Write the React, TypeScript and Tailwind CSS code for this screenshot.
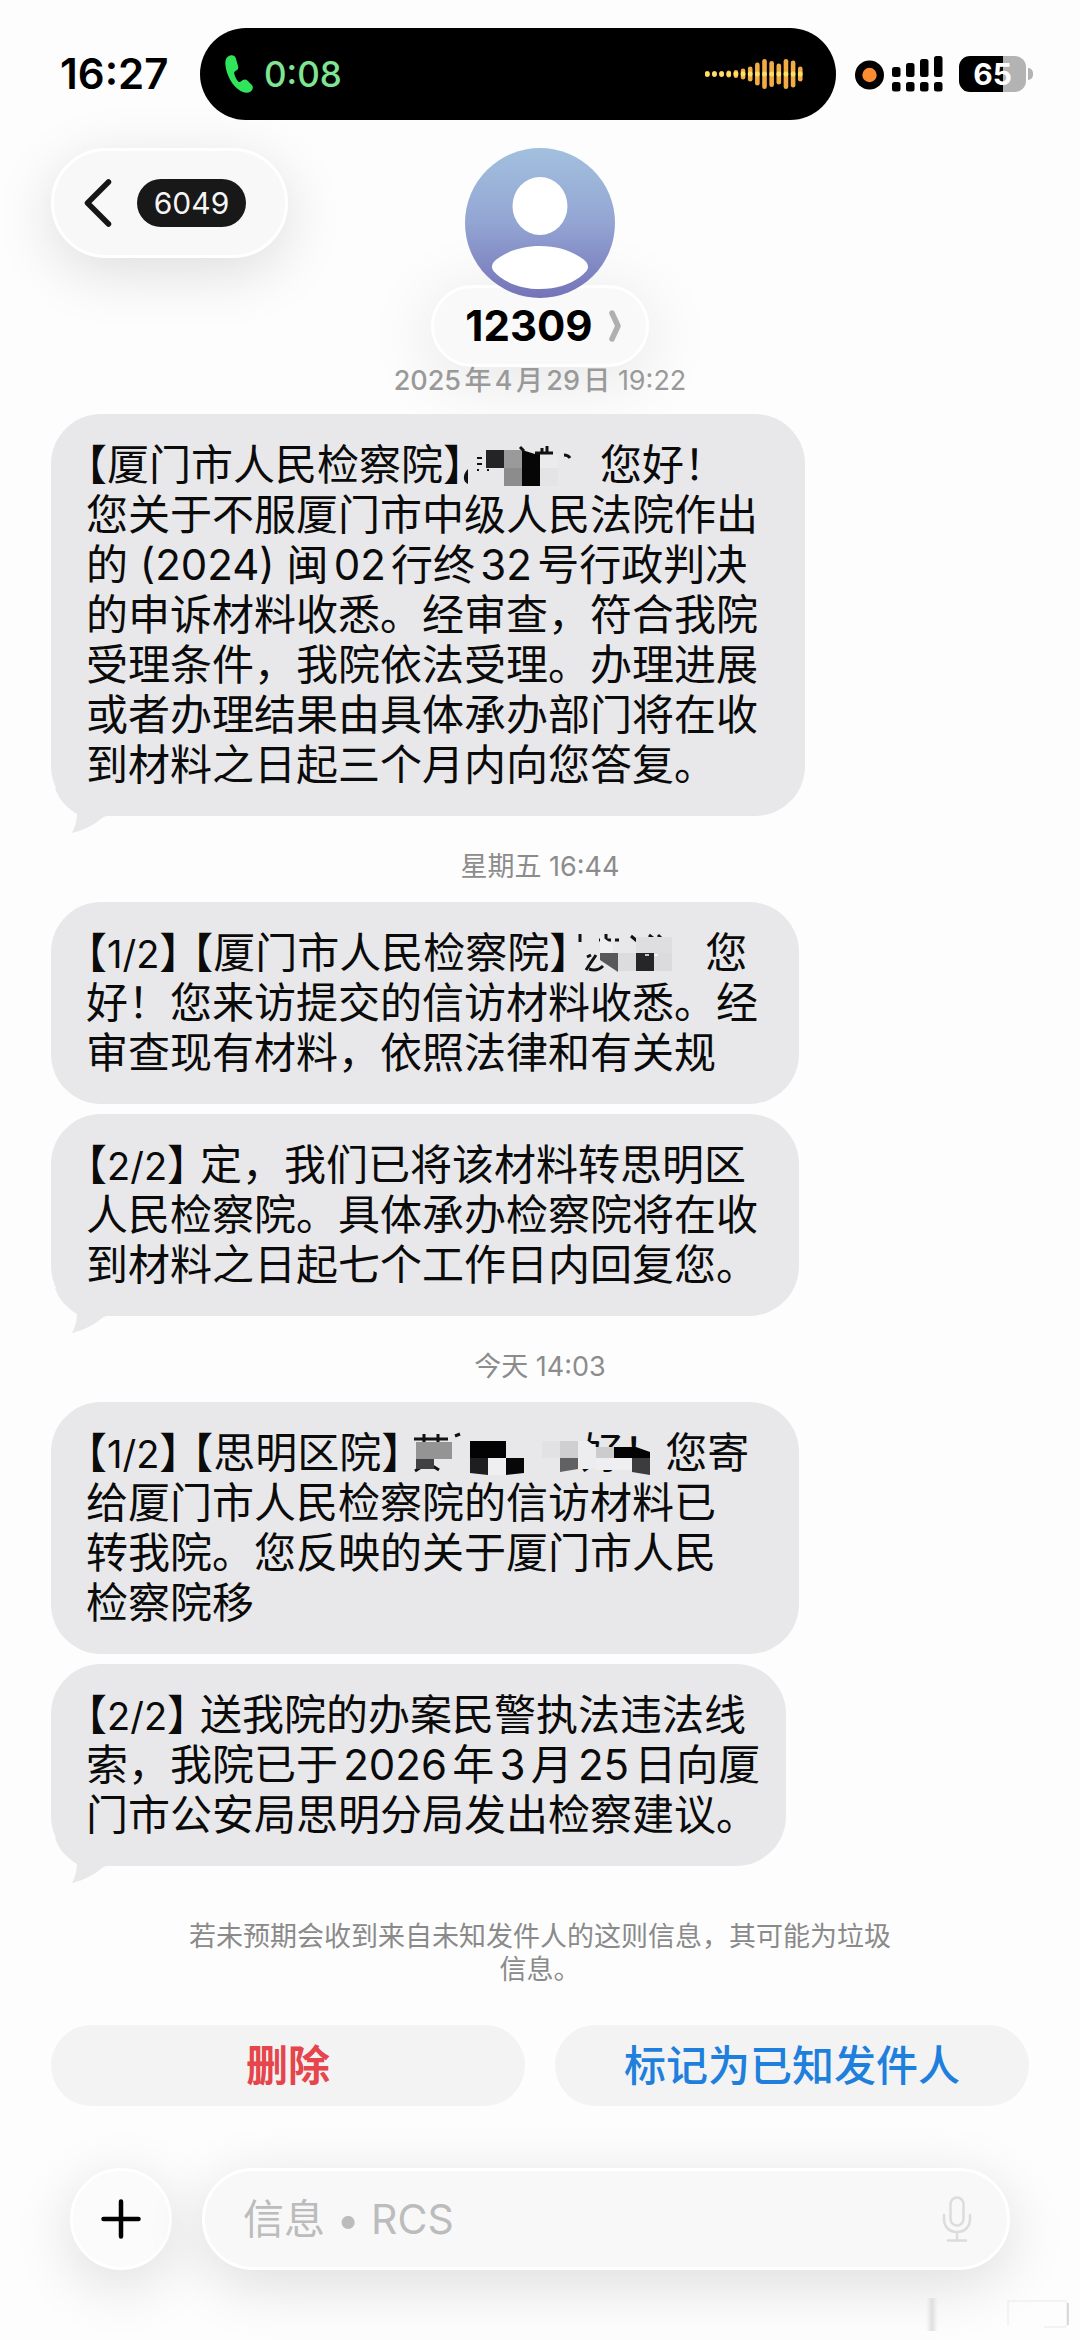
import React from 'react';

const WAVE = [6, 6, 6, 7, 8, 11, 15, 23, 30, 26, 21, 30, 27, 15];

const SIGNAL = [10, 14, 18, 21];

const StatusBar = () => (
  <div className="flex items-center pt-7">
    <div className="w-[200px] pl-[60px] text-[42px] leading-[50px] font-semibold text-black">16:27</div>
    <div className="flex-1 h-[92px] rounded-full bg-black flex items-center justify-between pl-[25px] pr-[32px]">
      <div className="flex items-center gap-[11px]">
        <svg viewBox="0 0 28 38" className="w-7 h-[38px]" fill="#30e45c">
          <path d="M5 .6C2 1.6.2 4 .3 8c.3 8 3.800 17 9.700 23.500 3.600 3.900 7.500 6 11.400 6.200 3 .1 5.200-1.200 6.200-3.700.6-1.500.2-3-1-4.200l-4.200-4.200c-1.400-1.300-3-1.400-4.500-.5l-2.600 1.700c-.8.5-1.500.4-2.100-.3-2-2.300-3.400-5.300-4-8.300-.2-.9.100-1.500.9-2l1.600-1c1.400-.9 1.900-2.300 1.400-4L10.900 3.500C10.100.9 7.700-.3 5 .6z" />
        </svg>
        <span className="text-[35px] leading-[40px] font-medium text-[#7fe592]">0:08</span>
      </div>
      <svg viewBox="0 0 99 32" className="w-[99px] h-8">
        {WAVE.map((h, i) => (
          <g key={i}>
            <rect x={i * 7.15} y={16 - h / 2} width="4.600" height={h} rx="2.300" fill="#f3ab45" />
            <rect x={i * 7.15} y="13.500" width="4.600" height="5" rx="2" fill="#fbe267" />
          </g>
        ))}
      </svg>
    </div>
    <div className="w-[244px] flex items-center pl-[19px]">
      <svg viewBox="0 0 88 36" className="w-[88px] h-9">
        <circle cx="14.500" cy="19" r="14.500" />
        <circle cx="14.500" cy="19" r="7.200" fill="#fb8c32" />
        {SIGNAL.map((h, i) => (
          <g key={i}>
            <rect x={37 + i * 14} y={21 - h} width="8.500" height={h} rx="2.500" />
            <rect x={37 + i * 14} y="26" width="8.500" height="9.500" rx="2.500" />
          </g>
        ))}
      </svg>
      <div className="ml-4 h-9 w-[67px] rounded-[11px] flex items-center justify-center bg-linear-to-r from-black from-65% to-[#b3b3b3] to-65% text-[30px] leading-[36px] font-bold text-white">
        65
      </div>
      <div className="ml-[2px] w-[5px] h-3 rounded-r-full bg-[#b3b3b3]" />
    </div>
  </div>
);

const Header = () => (
  <header className="grid grid-cols-[1fr_auto_1fr] px-[51px] pt-7">
    <button
      aria-label="返回"
      className="justify-self-start w-[237px] h-[110px] rounded-full border-3 border-white bg-[#f8f8f8] flex items-center pl-[30px] gap-[25px] shadow-[0_14px_60px_rgba(0,0,0,0.13)]"
    >
      <svg viewBox="0 0 28 48" className="w-7 h-12" fill="none" stroke="#161616" strokeWidth="5.500" strokeLinecap="round" strokeLinejoin="round">
        <path d="M24.500 3L3.500 24l21 21" />
      </svg>
      <span className="w-[109px] h-12 rounded-full bg-[#181818] text-[#f5f5f5] text-[30px] leading-[48px]">6049</span>
    </button>
    <div className="flex flex-col items-center">
      <svg viewBox="0 0 150 150" className="relative z-10 w-[150px] h-[150px]">
        <defs>
          <linearGradient id="avatar" x1="0" y1="0" x2="0" y2="1">
            <stop offset="0" stopColor="#a2c0de" />
            <stop offset="0.500" stopColor="#93a5d3" />
            <stop offset="1" stopColor="#7473b8" />
          </linearGradient>
        </defs>
        <circle cx="75" cy="75" r="75" fill="url(#avatar)" />
        <ellipse cx="75" cy="58" rx="27.500" ry="29" fill="#fff" />
        <path d="M27 119c0-4 3-7 8-10 11-7 24-11 40-11s29 4 40 11c5 3 8 6 8 10 0 3-3 6-8 10-11 8-24 12-40 12s-29-4-40-12c-5-4-8-7-8-10z" fill="#fff" />
      </svg>
      <button className="-mt-[13px] w-[218px] h-[82px] rounded-full border-3 border-white bg-[#f9f9f9] flex items-center justify-center gap-4 pl-[6px] shadow-[0_10px_70px_rgba(0,0,0,0.1)]">
        <span className="text-[42px] leading-[50px] font-bold text-black">12309</span>
        <svg viewBox="0 0 12 32" className="w-3 h-8" fill="none" stroke="#b0b0b0" strokeWidth="5.500" strokeLinecap="round" strokeLinejoin="round">
          <path d="M3 3l6 13-6 13" />
        </svg>
      </button>
    </div>
  </header>
);

const Tail = () => (
  <svg viewBox="0 0 56 46" className="absolute left-[2px] -bottom-[18px] w-14 h-[46px]" fill="#e8e8ea">
    <path d="M2 0C6 12 14 20 24 26c0 7-2 13-5 19 12-3 22-8 30-15 2-1.500 4-2 7-2V0z" />
  </svg>
);

const Bubble = ({ width, tail, children }: { width: string; tail?: boolean; children: React.ReactNode }) => (
  <div className={`relative max-w-full ${width} rounded-[50px] bg-[#e8e8ea] py-[26px] pl-[35px] text-[42px] leading-[50px] text-[#0b0b0b] whitespace-nowrap`}>
    {tail && <Tail />}
    <div className="relative">{children}</div>
  </div>
);

const Line = ({ children }: { children: React.ReactNode }) => (
  <p className="h-[50px] [text-autospace:normal] [text-spacing-trim:trim-start]">{children}</p>
);

// half-width form of a full-width bracket
const Half = ({ children }: { children: React.ReactNode }) => (
  <span className="[font-feature-settings:'halt']">{children}</span>
);

const Part = ({ n }: { n: string }) => (
  <>
    <Half>【</Half>
    <span className="text-[38px]">{n}</span>
    <Half>】</Half>
  </>
);

const Stamp = ({ children }: { children: React.ReactNode }) => (
  <p className="pt-[37px] pb-[21px] text-center text-[27px] leading-[28px] text-[#8c8c8c]">{children}</p>
);

const MosaicA = () => (
  <svg viewBox="0 0 115 40" className="inline-block align-top mt-[6px] w-[115px] h-10 overflow-visible">
    <path d="M-17 38c-5-2-6-9 0-15z" fill="#111" />
    <path d="M-8 12h5M-8 18h5M-8 24h2M2 24h2" stroke="#111" strokeWidth="2" />
    <rect x="1" y="4" width="18" height="18" fill="#242426" />
    <rect x="19" y="4" width="18" height="18" fill="#9a9a9b" />
    <rect x="19" y="22" width="18" height="18" fill="#8c8c8d" />
    <path d="M37 4l13 4h5v32H37z" fill="#060606" />
    <rect x="55" y="8" width="18" height="14" fill="#ebebed" />
    <rect x="55" y="22" width="18" height="18" fill="#e4e4e6" />
    <path d="M35 1l4 4M50 7h18M57 2v4M62 0v8M79 9q4 0 6 3" fill="none" stroke="#111" strokeWidth="3" />
  </svg>
);

const MosaicB = () => (
  <svg viewBox="4 0 114 40" className="inline-block align-top mt-[5px] w-[114px] h-10 overflow-visible">
    <path d="M-7 1v8M12 7h12M28 7h4M19 1v10M44 3l6 5M62 2l5 4M71 2l5 5M0 24l4-2M9 22l-10 15M2 36q8 3 14-3" fill="none" stroke="#111" strokeWidth="3" />
    <path d="M13 2l13 10v10H13z" fill="#efeff0" />
    <path d="M13 20h18v19L13 27z" fill="#58585a" />
    <rect x="31" y="20" width="18" height="18" fill="#dcdcde" />
    <rect x="49" y="4" width="36" height="16" fill="#dedee0" />
    <rect x="49" y="20" width="18" height="18" fill="#262628" />
    <rect x="67" y="20" width="18" height="18" fill="#dbdbdd" />
    <path d="M58 22h4M67 22h4" stroke="#fff" strokeWidth="1.500" />
  </svg>
);

const MosaicC = () => (
  <svg viewBox="12 0 158 42" className="relative z-10 inline-block align-top mt-[5px] w-[158px] h-[42px] overflow-visible">
    <path d="M3 6h34M13 1v10M27 1v10M44 3l5-2M4 38l8-5M20 32l8 5" fill="none" stroke="#111" strokeWidth="3" />
    <rect x="5" y="9" width="36" height="17" fill="#949495" />
    <path d="M5 26h18v10H5z" fill="#404042" />
    <rect x="59" y="8" width="36" height="17" fill="#030303" />
    <path d="M59 25h18v17l-18-2z" fill="#1e1e20" />
    <rect x="77" y="25" width="18" height="17" fill="#efeff1" />
    <path d="M95 25h18v15l-18 2z" fill="#070708" />
    <rect x="131" y="8" width="36" height="17" fill="#e2e2e4" />
    <rect x="149" y="8" width="18" height="17" fill="#cfcfd1" />
    <path d="M149 25h18v11l-18 3z" fill="#616163" />
    <path d="M167 8h10l8 6v22h-18z" fill="#ededef" />
    <rect x="185" y="14" width="18" height="11" fill="#cccccd" />
    <rect x="185" y="25" width="36" height="12" fill="#efeff1" />
    <path d="M203 14h22l14 5v6h-36z" fill="#030303" />
    <path d="M221 25h18v17l-18-3z" fill="#3c3c3e" />
  </svg>
);

const Conversation = () => (
  <main className="px-[51px]">
    <p className="mb-[19px] text-center text-[27px] leading-[28px] text-[#999] [text-autospace:normal]">
      <span className="font-medium">2025年4月29日</span> 19:22
    </p>
    <Bubble width="w-[754px]" tail>
      <Line>【厦门市人民检察院】<MosaicA />您好！</Line>
      <Line>您关于不服厦门市中级人民法院作出</Line>
      <Line>的 (2024) 闽02行终32号行政判决</Line>
      <Line>的申诉材料收悉。经审查，符合我院</Line>
      <Line>受理条件，我院依法受理。办理进展</Line>
      <Line>或者办理结果由具体承办部门将在收</Line>
      <Line>到材料之日起三个月内向您答复。</Line>
    </Bubble>
    <Stamp>星期五 16:44</Stamp>
    <div className="flex flex-col gap-[10px]">
      <Bubble width="w-[748px]">
        <Line><Part n="1/2" /> <Half>【</Half>厦门市人民检察院】<MosaicB />您</Line>
        <Line>好！您来访提交的信访材料收悉。经</Line>
        <Line>审查现有材料，依照法律和有关规</Line>
      </Bubble>
      <Bubble width="w-[748px]" tail>
        <Line><Part n="2/2" /> 定，我们已将该材料转思明区</Line>
        <Line>人民检察院。具体承办检察院将在收</Line>
        <Line>到材料之日起七个工作日内回复您。</Line>
      </Bubble>
    </div>
    <Stamp>今天 14:03</Stamp>
    <div className="flex flex-col gap-[10px]">
      <Bubble width="w-[748px]">
        <Line><Part n="1/2" /> <Half>【</Half>思明区院】<MosaicC />好！您寄</Line>
        <Line>给厦门市人民检察院的信访材料已</Line>
        <Line>转我院。您反映的关于厦门市人民</Line>
        <Line>检察院移</Line>
      </Bubble>
      <Bubble width="w-[735px]" tail>
        <Line><Part n="2/2" /> 送我院的办案民警执法违法线</Line>
        <Line>索，我院已于2026年3月25日向厦</Line>
        <Line>门市公安局思明分局发出检察建议。</Line>
      </Bubble>
    </div>
    <p className="mt-[54px] text-center text-[27px] leading-[33px] text-[#8a8a8a]">
      若未预期会收到来自未知发件人的这则信息，其可能为垃圾
      <br />
      信息。
    </p>
    <div className="mt-[39px] grid grid-cols-2 gap-[30px]">
      <button className="h-[81px] rounded-full bg-[#f3f3f4] text-[42px] font-semibold text-[#e5454b]">删除</button>
      <button className="h-[81px] rounded-full bg-[#f3f3f4] text-[42px] font-medium text-[#1f7fdc]">标记为已知发件人</button>
    </div>
  </main>
);

const Composer = () => (
  <footer className="relative flex items-center gap-[30px] px-[70px] pt-[62px] pb-[70px]">
    <button
      aria-label="添加"
      className="w-[102px] h-[102px] shrink-0 rounded-full border-3 border-white bg-[#fbfbfb] flex items-center justify-center shadow-[0_14px_60px_rgba(0,0,0,0.13)]"
    >
      <svg viewBox="0 0 40 40" className="w-10 h-10" fill="none" stroke="#000" strokeWidth="4.500" strokeLinecap="round">
        <path d="M20 2.500v35M2.500 20h35" />
      </svg>
    </button>
    <div className="flex-1 h-[102px] rounded-full border-3 border-white bg-[#f8f8f8] flex items-center pl-[38px] pr-[35px] shadow-[0_14px_60px_rgba(0,0,0,0.13)]">
      <input
        type="text"
        aria-label="信息"
        placeholder="信息 • RCS"
        className="flex-1 min-w-0 h-[60px] bg-transparent text-[41px] leading-[60px] placeholder:text-[#bcbcbc] outline-none"
      />
      <svg viewBox="0 0 30 46" className="w-[30px] h-[46px]" fill="none" stroke="#dcdcdc" strokeWidth="2.500" strokeLinecap="round">
        <rect x="8.500" y="1.500" width="13" height="28" rx="6.500" />
        <path d="M2 19v4c0 8 5.500 13 13 13s13-5 13-13v-4M15 36v8M6 44.500h18" />
      </svg>
    </div>
    <svg viewBox="0 0 146 36" className="absolute right-2 bottom-[8px] w-[146px] h-9" fill="none">
      <defs>
        <linearGradient id="smear" x1="0" x2="1" y1="0" y2="0">
          <stop offset="0" stopColor="#e4e4e4" stopOpacity="0" />
          <stop offset="0.500" stopColor="#dedede" />
          <stop offset="1" stopColor="#e4e4e4" stopOpacity="0" />
        </linearGradient>
      </defs>
      <rect x="0" y="2" width="12" height="33" fill="url(#smear)" />
      <path d="M82 30V5h56q3 0 3 3v20q0 3-3 3h-20" stroke="#f0f0f0" strokeWidth="1.500" />
      <path d="M142 7v22" stroke="#cfcfcf" strokeWidth="1.500" />
    </svg>
  </footer>
);

export default function App() {
  return (
    <div className="min-h-screen overflow-hidden bg-[#fdfdfd] font-[Inter,'Noto_Sans_CJK_SC',sans-serif]">
      <StatusBar />
      <Header />
      <Conversation />
      <Composer />
    </div>
  );
}
